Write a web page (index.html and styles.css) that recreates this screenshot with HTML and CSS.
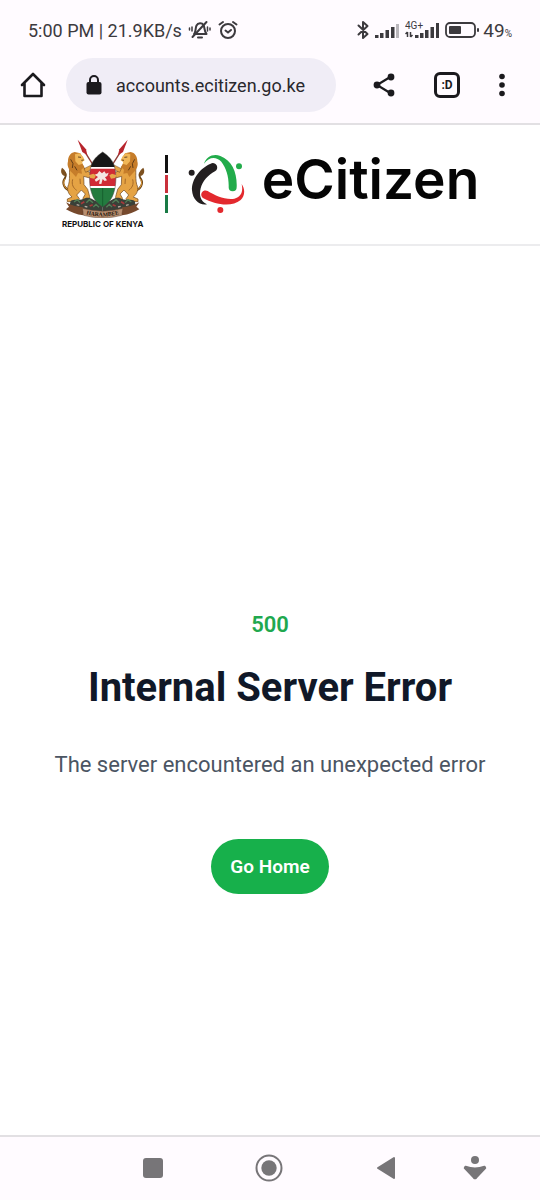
FILE: index.html
```html
<!DOCTYPE html>
<html lang="en">
<head>
<meta charset="utf-8">
<meta name="viewport" content="width=device-width, initial-scale=1">
<title>Internal Server Error</title>
<link rel="stylesheet" href="styles.css">
</head>
<body>
<div class="screen">
  <div class="browser">
    <div class="status">
      <div class="status-left">
        <span class="clock">5:00 PM | 21.9KB/s</span>
        <svg viewBox="0 0 24 22" width="24" height="22" fill="none" stroke="#3c3a3e" stroke-width="2" stroke-linecap="round">
          <path d="M6 15H18.500M6.500 14.500C8 12 7.300 9 8.500 6.500C10 3.500 14 3.500 15.500 6C17 9 16 12 18.500 15M10 18.500H14"/>
          <path d="M4.500 18L18.500 3"/>
          <path d="M4 8V12M1.500 9V11M19.500 8V12M22 9V11" stroke-width="1.500"/>
        </svg>
        <svg viewBox="0 0 20 20" width="20" height="20" fill="none" stroke="#3c3a3e" stroke-width="2" stroke-linecap="round">
          <circle cx="10" cy="11" r="7"/><path d="M7.500 10.500L10 12.500L13 10M1.500 4.500L5 2M18.500 4.500L15 2"/>
        </svg>
      </div>
      <div class="status-right">
        <svg viewBox="0 0 12 20" width="12" height="20" fill="none" stroke="#3c3a3e" stroke-width="2" stroke-linejoin="round" stroke-linecap="round"><path d="M1.500 5.500L10.500 14L6 18V2L10.500 6L1.500 14.500"/></svg>
        <svg viewBox="0 0 24 20" width="24" height="20" fill="#3c3a3e"><path d="M0 15h3.500v3H0zM5 13h3.500v5H5zM10.500 10H14v8h-3.500zM16 7h3.500v11H16z"/><path d="M21 4h3v14h-3z" fill="#b9b6bb"/></svg>
        <svg viewBox="0 0 34 20" width="34" height="20" fill="#3c3a3e">
          <path d="M10 15h3.500v3H10zM15 13h3.500v5H15zM20 10h3.500v8H20zM25.500 7H29v11h-3.500zM31 3h3v15h-3z"/>
          <path d="M2.500 12v5M0.500 14l2-2M5.500 12v5M7.500 15l-2 2" stroke="#3c3a3e" stroke-width="1.500" fill="none"/>
          <text x="0" y="9" class="network">4G+</text>
        </svg>
        <svg viewBox="0 0 34 16" width="34" height="16"><rect x="1" y="1" width="29" height="14" rx="4" fill="none" stroke="#3c3a3e" stroke-width="1.800"/><rect x="4" y="4" width="12" height="8" rx="1" fill="#3c3a3e"/><rect x="32" y="6" width="2" height="4" rx="1" fill="#3c3a3e"/></svg>
        <span class="charge">49<small>%</small></span>
      </div>
    </div>
    <div class="toolbar">
      <button class="tool home" aria-label="Home"><svg viewBox="0 0 26 26" width="26" height="26" fill="none" stroke="#1b1a1e" stroke-width="2.600" stroke-linejoin="round" stroke-linecap="round"><path d="M2 13L13 2L24 13M4.500 11V24H21.500V11"/></svg></button>
      <label class="address">
        <svg viewBox="0 0 16 20" width="16" height="20"><rect x="0.500" y="7" width="15" height="12.500" rx="2" fill="#1b1a1e"/><path d="M4 8V5a4 4 0 0 1 8 0v3" fill="none" stroke="#1b1a1e" stroke-width="2"/></svg>
        <input type="text" aria-label="Address" value="accounts.ecitizen.go.ke">
      </label>
      <button class="tool" aria-label="Share"><svg viewBox="0 0 22 24" width="22" height="24" fill="#1b1a1e"><path d="M18 3.500L4 12L18 20.500" fill="none" stroke="#1b1a1e" stroke-width="2.200"/><circle cx="4" cy="12" r="3.400"/><circle cx="18" cy="4" r="3.400"/><circle cx="18" cy="20" r="3.400"/></svg></button>
      <button class="tool tabs" aria-label="Tabs"><span>:D</span></button>
      <button class="tool menu" aria-label="Menu"><svg viewBox="0 0 6 24" width="6" height="24" fill="#1b1a1e"><circle cx="3" cy="3.500" r="2.800"/><circle cx="3" cy="12" r="2.800"/><circle cx="3" cy="20.500" r="2.800"/></svg></button>
    </div>
  </div>

  <header class="brand">
    <div class="arms">
      <svg viewBox="33 24 252 240" width="84" height="80" aria-hidden="true">
        <defs>
          <g id="side">
            <path d="M96 52L140 122" stroke="#8d3b34" stroke-width="4"/>
            <path d="M83 29L108 58L112 76L97 66Z" fill="#b7242c"/>
            <path d="M62 182C44 178 34 160 44 146C50 136 48 128 40 126" fill="none" stroke="#6b4518" stroke-width="6"/>
            <path d="M62 182C44 178 36 160 45 147" fill="none" stroke="#e09a38" stroke-width="3"/>
            <path d="M36 113C30 123 34 136 45 138C51 128 45 119 36 113Z" fill="#7d5120"/>
            <path d="M64 94C54 116 62 140 56 163C49 177 54 191 66 201L52 207V215H84L88 206L80 195L94 180L106 192L99 204V213H119L119 200L113 178L102 164L101 139L127 146L137 139L132 130L108 123L96 103Z" fill="#e5a344" stroke="#6b431a" stroke-width="2" stroke-linejoin="round"/>
            <path d="M74 66C61 68 54 80 54 94C50 108 56 119 67 129L78 141L84 129L96 131L94 119L103 111L96 99L100 85L91 70Z" fill="#c67d2a"/>
            <path d="M75 73L89 70L99 80L104 91L96 96L98 101L86 105L76 94Z" fill="#f0b758"/>
            <path d="M84 81L93 82M94 91L101 90M62 88L69 101L67 114M74 109L81 121" fill="none" stroke="#4c2f13" stroke-width="2.500"/>
            <path d="M68 148C64 164 70 174 80 181M90 146L91 162" fill="none" stroke="#a66a28" stroke-width="3"/>
            <path d="M102 116L126 104L134 109L127 117L107 127Z" fill="#e5a344" stroke="#6b431a" stroke-width="1.500"/>
            <path d="M62 213C74 205 89 214 105 205C118 200 128 208 158 225V248C119 241 91 240 59 225Z" fill="#3a4038"/>
            <path d="M72 216l10-7 8 9M109 218l9-9 11 9M130 231l8-8 9 9" fill="none" stroke="#518057" stroke-width="4"/>
            <path d="M93 221l10-6M119 228l9-4" stroke="#a6383b" stroke-width="5"/><path d="M80 224l8 2M104 229l8 2" stroke="#b8aaa1" stroke-width="4"/>
            <path d="M48 217C66 228 84 231 100 232V256C79 254 63 247 48 238L57 230Z" fill="#76492d"/>
          </g>
        </defs>
        <use href="#side"/><use href="#side" transform="translate(316 0) scale(-1 1)"/>
        <clipPath id="shield"><path d="M158 66C176 78 188 91 193 108C200 135 199 167 190 192C184 210 173 221 158 231C143 221 132 210 126 192C117 167 116 135 123 108C128 91 140 78 158 66Z"/></clipPath>
        <g clip-path="url(#shield)"><path d="M110 60h96v52h-96z" fill="#171717"/><path d="M110 111h96v65h-96z" fill="#fff"/><path d="M110 116h96v52h-96z" fill="#d02b35"/><path d="M110 174h96v60h-96z" fill="#237b3f"/><path d="M158 174v58" stroke="#17612f" stroke-width="3"/></g>
        <path d="M158 66C176 78 188 91 193 108C200 135 199 167 190 192C184 210 173 221 158 231C143 221 132 210 126 192C117 167 116 135 123 108C128 91 140 78 158 66Z" fill="none" stroke="#494741" stroke-width="1.500"/>
        <path d="M148 123l8 7 7-6 5 7 8-3-4 10-7 4 6 9-7 2-6-6-4 15-7-1 3-13-12 7-4-6 10-8-10-7 8-3z" fill="#f4e7e3"/>
        <path d="M116 136l14-5 8 5-5 10-12-2M200 136l-14-5-8 5 5 10 12-2" fill="#e6a64a"/>
        <path d="M97 235Q158 252 219 235L215 256Q158 272 101 256Z" fill="#b98f70" stroke="#5b3b28" stroke-width="1.500"/>
        <path id="motto-line" d="M103 251Q158 267 213 251" fill="none"/>
        <text class="motto"><textPath href="#motto-line" startOffset="50%" text-anchor="middle">HARAMBEE</textPath></text>
      </svg>
      <span class="republic">REPUBLIC OF KENYA</span>
    </div>
    <svg viewBox="0 0 3 58" width="3" height="58" aria-hidden="true"><path d="M0 0h3v18H0z" fill="#111"/><path d="M0 20h3v18H0z" fill="#c9303b"/><path d="M0 40h3v18H0z" fill="#187a45"/></svg>
    <div class="logo">
      <svg viewBox="98 57 171 180" width="57" height="60" aria-hidden="true">
        <g fill="#231f20"><circle cx="109" cy="113" r="9"/><path d="M166 86C137 98 108 131 110 166C112 195 132 212 155 208C135 200 131 181 136 160C141 139 158 120 179 109A13 13 0 0 0 166 86Z"/></g>
        <g fill="#22ac4b"><circle cx="251" cy="94" r="9"/><path d="M146 86C153 66 173 55 195 63C231 76 246 115 244 157A12 12 0 0 1 220 157C221 126 213 100 198 80C181 63 160 67 146 86Z"/></g>
        <g fill="#e3292e"><circle cx="195" cy="225" r="9"/><path d="M157 168C178 181 209 195 237 191C257 186 264 170 259 147C270 163 269 183 256 195C228 219 178 208 144 190A12 12 0 0 1 157 168Z"/></g>
      </svg>
      <span class="wordmark">eCitizen</span>
    </div>
  </header>

  <main class="error">
    <p class="code">500</p>
    <h1>Internal Server Error</h1>
    <p class="message">The server encountered an unexpected error</p>
    <a class="go-home" href="#">Go Home</a>
  </main>

  <nav class="system" aria-label="System navigation">
    <button aria-label="Recent apps"><svg viewBox="0 0 28 28" width="28" height="28"><rect x="4" y="4" width="20" height="20" rx="3" fill="#777578"/></svg></button>
    <button aria-label="Home screen"><svg viewBox="0 0 28 28" width="28" height="28"><circle cx="14" cy="14" r="12.500" fill="none" stroke="#777578" stroke-width="2"/><circle cx="14" cy="14" r="7.700" fill="#777578"/></svg></button>
    <button aria-label="Back"><svg viewBox="0 0 28 28" width="28" height="28"><path d="M6 14L22 4V24Z" fill="#777578" stroke="#777578" stroke-width="2" stroke-linejoin="round"/></svg></button>
    <button aria-label="Accessibility"><svg viewBox="0 0 28 28" width="28" height="28" fill="#777578"><circle cx="14" cy="6" r="4"/><path d="M4.500 13Q14 16.500 23.500 13L24 14L15 23.500Q14 24.500 13 23.500L4 14Z" stroke="#777578" stroke-width="2.500" stroke-linejoin="round"/></svg></button>
  </nav>
</div>
</body>
</html>
```
FILE: styles.css
```css
* { box-sizing: border-box; }
body { margin: 0; background: #fff; font-family: Roboto, "Liberation Sans", sans-serif; }
svg { display: block; flex: none; }
button { display: grid; place-items: center; padding: 0; border: 0; background: none; color: inherit; font: inherit; }
.screen { display: flex; flex-direction: column; min-height: 100vh; }

.browser { background: #fffbff; border-bottom: 2px solid #e2e0e3; }
.status { display: flex; justify-content: space-between; align-items: center; height: 58px; padding: 2px 28px 0; color: #3c3a3e; font-size: 19px; white-space: nowrap; }
.status-left, .status-right { display: flex; align-items: center; gap: 6px; }
.clock { font-size: 18px; }
.network { font-size: 10px; }
.charge small { font-size: 10px; }
.status-right > .charge { margin-left: -2px; }

.toolbar { display: flex; align-items: center; padding: 0 22px 11px 20px; color: #1b1a1e; }
.tool { flex: none; width: 48px; height: 48px; }
.home { width: 26px; margin-right: 20px; }
.address { display: flex; flex: 1; align-items: center; gap: 14px; min-width: 0; height: 54px; margin-right: 24px; padding: 0 20px; border-radius: 27px; background: #f0edf6; }
.address input { flex: 1; width: 0; min-width: 0; padding: 0; border: 0; outline: 0; background: none; color: #29282d; font: inherit; font-size: 18px; }
.tabs { margin: 0 15px; }
.tabs span { display: grid; place-items: center; width: 26px; height: 26px; border: 3px solid #1b1a1e; border-radius: 6px; font-size: 12px; font-weight: 700; line-height: 20px; }
.menu { width: 32px; }

.brand { display: flex; align-items: center; justify-content: center; gap: 20px; padding: 13px 0 14px; border-bottom: 2px solid #ececee; }
.arms { display: flex; flex-direction: column; align-items: center; width: 84px; }
.republic { color: #111; font: 700 8px/12px Inter, sans-serif; white-space: nowrap; }
.motto { fill: #24170f; font: 700 17px "Liberation Serif", serif; }
.logo { display: flex; align-items: center; gap: 17px; }
.wordmark { padding-bottom: 10px; color: #050505; font: 600 55px/60px Inter, sans-serif; }

.error { display: flex; flex: 1; flex-direction: column; align-items: center; justify-content: center; padding: 122px 20px 0; text-align: center; }
.error p, .error h1 { margin: 0; }
.error .code { color: #20a84e; font-size: 22px; font-weight: 600; line-height: 32px; }
.error h1 { margin-top: 22px; color: #101828; font-size: 40px; font-weight: 700; line-height: 50px; }
.error .message { margin-top: 34px; color: #4b5563; font-size: 22px; line-height: 36px; }
.go-home { margin-top: 56px; padding: 14px 19px; border-radius: 28px; background: #17b04b; color: #fff; font-size: 19px; font-weight: 600; line-height: 27px; text-decoration: none; }

.system { display: grid; grid-template-columns: 116fr 116fr 117fr 62fr; align-items: center; height: 65px; padding: 0 34px 2px 95px; border-top: 2px solid #e2e0e3; background: #fffbff; }
```
